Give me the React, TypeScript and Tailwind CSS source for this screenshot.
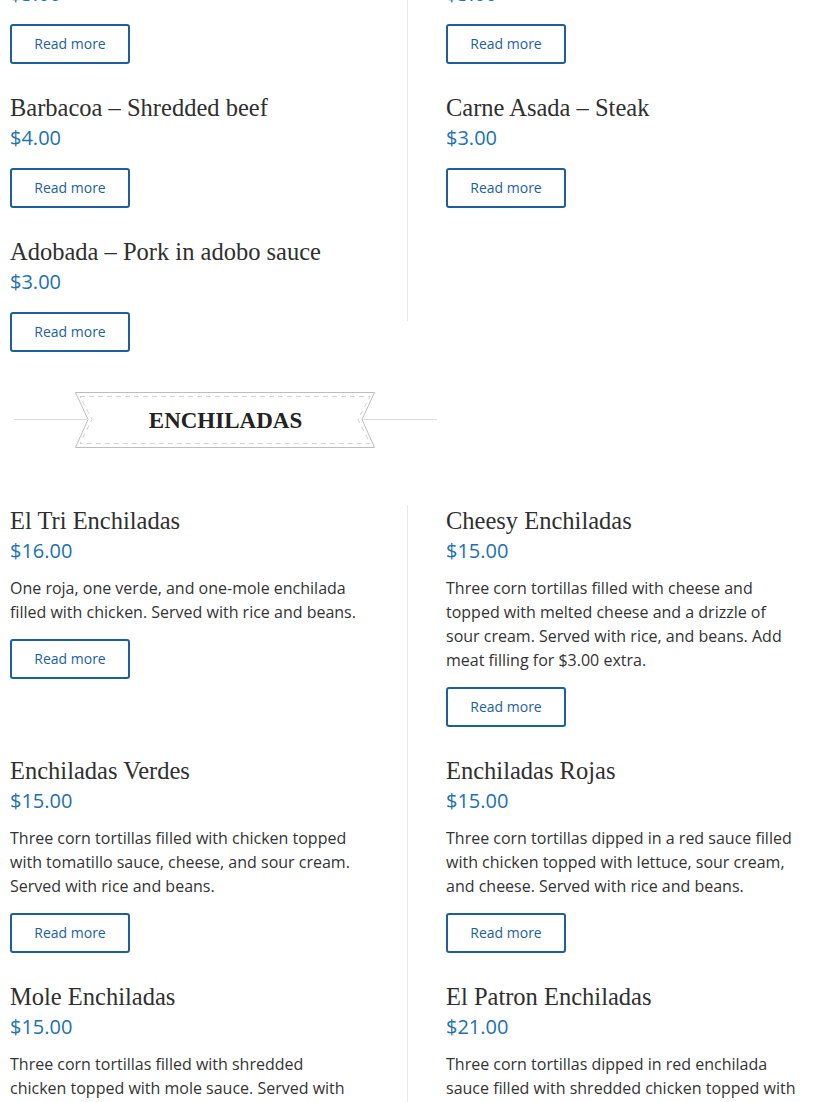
import React from "react";

type Item = {
  name: string;
  price: string;
  desc?: string;
};

const serif = "font-['Liberation_Serif','Times_New_Roman',serif]";

const meatRows: [Item, Item | null][] = [
  [
    { name: "Pollo – Grilled chicken", price: "$3.00" },
    { name: "Al Pastor – Marinated pork", price: "$3.00" },
  ],
  [
    { name: "Barbacoa – Shredded beef", price: "$4.00" },
    { name: "Carne Asada – Steak", price: "$3.00" },
  ],
  [{ name: "Adobada – Pork in adobo sauce", price: "$3.00" }, null],
];

const enchiladaRows: [Item, Item][] = [
  [
    {
      name: "El Tri Enchiladas",
      price: "$16.00",
      desc: "One roja, one verde, and one-mole enchilada filled with chicken. Served with rice and beans.",
    },
    {
      name: "Cheesy Enchiladas",
      price: "$15.00",
      desc: "Three corn tortillas filled with cheese and topped with melted cheese and a drizzle of sour cream. Served with rice, and beans. Add meat filling for $3.00 extra.",
    },
  ],
  [
    {
      name: "Enchiladas Verdes",
      price: "$15.00",
      desc: "Three corn tortillas filled with chicken topped with tomatillo sauce, cheese, and sour cream. Served with rice and beans.",
    },
    {
      name: "Enchiladas Rojas",
      price: "$15.00",
      desc: "Three corn tortillas dipped in a red sauce filled with chicken topped with lettuce, sour cream, and cheese. Served with rice and beans.",
    },
  ],
  [
    {
      name: "Mole Enchiladas",
      price: "$15.00",
      desc: "Three corn tortillas filled with shredded chicken topped with mole sauce. Served with rice and beans.",
    },
    {
      name: "El Patron Enchiladas",
      price: "$21.00",
      desc: "Three corn tortillas dipped in red enchilada sauce filled with shredded chicken topped with cheese, lettuce and sour cream. Served with rice and beans.",
    },
  ],
];

function Product({ item }: { item: Item }) {
  return (
    <div className="pb-[28px]">
      <h3
        className={`${serif} text-[24.5px] leading-[31px] text-[#2f2f2f]`}
      >
        {item.name}
      </h3>
      <div className="text-[20px] leading-[30px] text-[#2170b0]">
        {item.price}
      </div>
      {item.desc && (
        <p className="mt-[10px] text-[16px] leading-[24px] text-[#333333]">
          {item.desc}
        </p>
      )}
      <button className="mt-[15px] flex h-[40px] w-[120px] items-center justify-center rounded-[3px] border-2 border-[#1d5f9c] pb-px text-[14px] text-[#1d5f9c]">
        Read more
      </button>
    </div>
  );
}

function Row({
  left,
  right,
  dividerClass = "",
}: {
  left: Item;
  right: Item | null;
  dividerClass?: string;
}) {
  return (
    <div className="flex">
      <div className="w-[350px]">
        <Product item={left} />
      </div>
      <div className={`ml-[47px] w-px bg-[#e8e8e8] ${dividerClass}`}></div>
      <div className="ml-[38px] w-[352px]">
        {right && <Product item={right} />}
      </div>
    </div>
  );
}

function Banner({ title }: { title: string }) {
  return (
    <div className="relative ml-[4px] flex h-[56px] w-[423px] items-center justify-center">
      <svg
        className="absolute inset-0"
        width="423"
        height="56"
        viewBox="0 0 423 56"
        fill="none"
      >
        <line x1="0" y1="27.5" x2="73" y2="27.5" stroke="#dddddd" />
        <line x1="348" y1="27.5" x2="423" y2="27.5" stroke="#dddddd" />
        <polygon
          points="61.5,0.5 360.5,0.5 348,27.5 360.5,55.5 61.5,55.5 74,27.5"
          fill="#ffffff"
          stroke="#bdbdbd"
        />
        <polygon
          points="66,4.5 356,4.5 344,27.5 356,51.5 66,51.5 78,27.5"
          stroke="#d3d3d3"
          strokeDasharray="5 4"
        />
      </svg>
      <span
        className={`${serif} relative text-[23px] font-bold leading-none text-[#222222]`}
      >
        {title}
      </span>
    </div>
  );
}

export default function App() {
  return (
    <div className="h-[1102px] overflow-hidden bg-white font-['Open_Sans','Noto_Sans',sans-serif]">
      <div className="-mt-[52px] px-[10px]">
        {meatRows.map(([l, r], i) => (
          <Row
            key={l.name}
            left={l}
            right={r}
            dividerClass={i === meatRows.length - 1 ? "mb-[59px]" : ""}
          />
        ))}

        <div className="mt-[12px]">
          <Banner title="ENCHILADAS" />
        </div>

        <div className="mt-[57px]">
          {enchiladaRows.map(([l, r]) => (
            <Row key={l.name} left={l} right={r} />
          ))}
        </div>
      </div>
    </div>
  );
}
